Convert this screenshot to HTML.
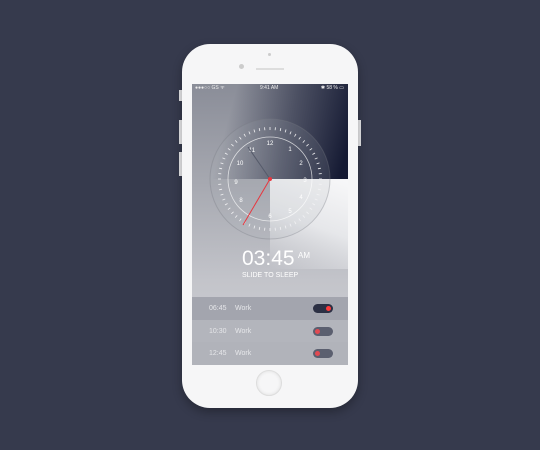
<!DOCTYPE html><html><head><style>
body{margin:0;width:540px;height:450px;background:#363a4d;position:relative;overflow:hidden;font-family:"Liberation Sans",sans-serif}
.phone{position:absolute;left:182px;top:44px;width:176px;height:364px;background:#f6f6f7;border-radius:28px;box-shadow:0 4px 10px rgba(0,0,0,.3)}
.btn{position:absolute;background:#e8e8ea;width:3px}
.screen{position:absolute;left:192px;top:84px;width:156px;height:281px;overflow:hidden;background:linear-gradient(180deg,#8a8d98 0%,#a6a8b0 35%,#c3c4ca 70%,#cfd0d4 100%)}
.dark{position:absolute;left:0;top:0;width:156px;height:95px;background:linear-gradient(105deg,rgba(21,26,51,0) 25%,rgba(21,26,51,.55) 60%,#151a33 95%)}
.white{position:absolute;left:78px;top:95px;width:78px;height:90px;background:linear-gradient(200deg,#f8f8f9 0%,#e6e7ea 50%,rgba(205,206,211,0) 100%)}
.status{position:absolute;top:0;left:0;width:156px;height:9px;font-size:5px;color:#eee;line-height:9px}
.rows div{position:absolute;left:0;width:156px;height:23px;font-size:7px;color:#e6e7ea;line-height:23px}
.sw{position:absolute;right:15px;top:7px;width:20px;height:9px;border-radius:5px;background:#5b5f6f}
.sw i{position:absolute;top:2px;width:5px;height:5px;border-radius:50%;background:#e24a52}
</style></head><body>
<div class="btn" style="left:179px;top:90px;height:11px"></div>
<div class="btn" style="left:179px;top:120px;height:24px"></div>
<div class="btn" style="left:179px;top:152px;height:24px"></div>
<div class="btn" style="left:358px;top:120px;height:26px"></div>
<div class="phone">
<div style="position:absolute;left:57px;top:20px;width:5px;height:5px;border-radius:50%;background:#ccc"></div>
<div style="position:absolute;left:86px;top:9px;width:3px;height:3px;border-radius:50%;background:#ccc"></div>
<div style="position:absolute;left:74px;top:24px;width:28px;height:2px;background:#ddd"></div>
<div style="position:absolute;left:74px;top:326px;width:26px;height:26px;border-radius:50%;border:1px solid #ddd;box-sizing:border-box;box-shadow:inset 0 0 3px #ddd"></div>
</div>
<div class="screen">
<div class="dark"></div>
<div class="white"></div>
<div class="status"><span style="position:absolute;left:3px">●●●○○ GS ᯤ</span><span style="position:absolute;left:68px">9:41 AM</span><span style="position:absolute;right:4px">✱ 58 % ▭</span></div>
<svg style="position:absolute;left:0;top:0" width="156" height="281">
<circle cx="78" cy="95" r="60" fill="rgba(170,172,180,.15)" stroke="rgba(120,122,132,.35)" stroke-width="1"/>
<g stroke="#f2f2f4" stroke-width="0.8" id="t"></g>
<circle cx="78" cy="95" r="42" fill="none" stroke="rgba(255,255,255,.7)" stroke-width="0.8"/>
<g font-size="6" fill="#fff" text-anchor="middle" font-family="Liberation Sans">
<text x="78" y="61">12</text><text x="98" y="67">1</text><text x="109" y="81">2</text><text x="113" y="98">3</text><text x="109" y="115">4</text><text x="98" y="129">5</text><text x="78" y="134">6</text><text x="49" y="118">8</text><text x="44" y="100">9</text><text x="48" y="81">10</text><text x="60" y="68">11</text></g>
<line x1="78" y1="95" x2="56" y2="63" stroke="#555a6a" stroke-width="1"/>
<line x1="78" y1="95" x2="51" y2="141" stroke="#e8363e" stroke-width="1"/>
<circle cx="78" cy="95" r="2" fill="#e8363e"/>
</svg>
<div style="position:absolute;left:50px;top:163px;font-size:21px;color:#fff">03:45</div>
<div style="position:absolute;left:106px;top:167px;font-size:8px;color:#fff">AM</div>
<div style="position:absolute;left:50px;top:188px;font-size:7px;color:#fff">SLIDE TO SLEEP</div>
<div class="rows">
<div style="top:213px;background:#a3a5ae"><span style="position:absolute;left:17px">06:45</span><span style="position:absolute;left:43px">Work</span><span class="sw" style="background:#2c3044"><i style="right:2px;background:#ff3b3b"></i></span></div>
<div style="top:236px;background:#b3b5bc"><span style="position:absolute;left:17px">10:30</span><span style="position:absolute;left:43px">Work</span><span class="sw"><i style="left:2px"></i></span></div>
<div style="top:258px;background:#b1b3ba"><span style="position:absolute;left:17px">12:45</span><span style="position:absolute;left:43px">Work</span><span class="sw"><i style="left:2px"></i></span></div>
</div>
</div>
<script>
var g=document.getElementById('t'),s='';for(var i=0;i<60;i++){var a=i*6*Math.PI/180,c=Math.cos(a),n=Math.sin(a);s+='<line x1="'+(78+c*49)+'" y1="'+(95+n*49)+'" x2="'+(78+c*52)+'" y2="'+(95+n*52)+'"/>';}g.innerHTML=s;
</script>
</body></html>
